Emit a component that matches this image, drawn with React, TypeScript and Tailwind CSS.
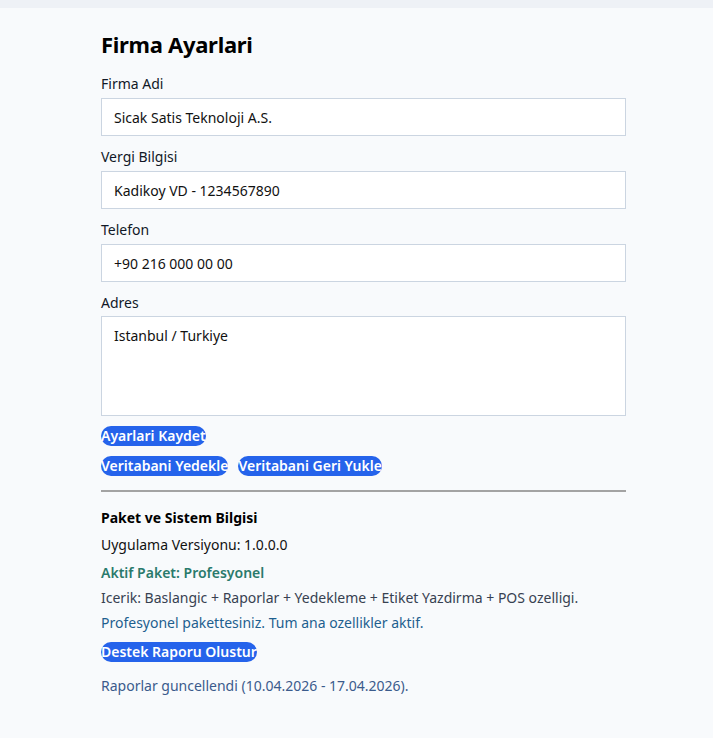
import React from 'react'

const font = { fontFamily: '"Noto Sans", "Open Sans", sans-serif' }

function Field({ label, value }: { label: string; value: string }) {
  return (
    <div className="flex flex-col">
      <label className="text-[14px] leading-[20px] text-[#111827] mb-[4px]">{label}</label>
      <input
        readOnly
        value={value}
        className="h-[38px] w-full border border-[#cbd5e1] bg-white px-[12px] text-[14px] text-[#111] outline-none"
      />
    </div>
  )
}

function PillButton({ children }: { children: React.ReactNode }) {
  return (
    <button className="h-[20px] rounded-full bg-[#2563eb] text-[14px] font-semibold leading-[20px] text-white">
      {children}
    </button>
  )
}

export default function App() {
  return (
    <div className="min-h-[738px] bg-[#f8fafc]" style={font}>
      <div className="h-[8px] bg-[#eef1f6]" />
      <div className="ml-[101px] w-[525px] pt-[21px]">
        <h1 className="text-[22px] font-bold leading-[30px] text-black mb-[15px] tracking-[-0.3px]">Firma Ayarlari</h1>
        <div className="flex flex-col gap-[11px]">
          <Field label="Firma Adi" value="Sicak Satis Teknoloji A.S." />
          <Field label="Vergi Bilgisi" value="Kadikoy VD - 1234567890" />
          <Field label="Telefon" value="+90 216 000 00 00" />
          <div className="flex flex-col">
            <label className="text-[14px] leading-[20px] text-[#111827] mb-[3px]">Adres</label>
            <textarea
              readOnly
              value="Istanbul / Turkiye"
              className="h-[100px] w-full resize-none border border-[#cbd5e1] bg-white px-[12px] py-[8px] text-[14px] text-[#111] outline-none"
            />
          </div>
        </div>
        <div className="mt-[10px] flex">
          <PillButton>Ayarlari Kaydet</PillButton>
        </div>
        <div className="mt-[10px] flex gap-[10px]">
          <PillButton>Veritabani Yedekle</PillButton>
          <PillButton>Veritabani Geri Yukle</PillButton>
        </div>
        <hr className="mt-[14px] border-0 h-[2px] bg-[#a3a3a3]" />
        <h3 className="mt-[16px] text-[14px] font-bold leading-[20px] text-black">Paket ve Sistem Bilgisi</h3>
        <p className="mt-[7px] text-[14px] leading-[20px] text-[#111]">Uygulama Versiyonu: 1.0.0.0</p>
        <p className="mt-[8px] text-[14px] font-semibold leading-[20px] text-[#2a7a6c]">Aktif Paket: Profesyonel</p>
        <p className="mt-[5px] text-[14px] leading-[20px] text-[#374151]">
          Icerik: Baslangic + Raporlar + Yedekleme + Etiket Yazdirma + POS ozelligi.
        </p>
        <p className="mt-[5px] text-[14px] leading-[20px] text-[#1e5f8f]">
          Profesyonel pakettesiniz. Tum ana ozellikler aktif.
        </p>
        <div className="mt-[9px] flex">
          <PillButton>Destek Raporu Olustur</PillButton>
        </div>
        <p className="mt-[14px] text-[14px] leading-[20px] text-[#3b5b8c]">
          Raporlar guncellendi (10.04.2026 - 17.04.2026).
        </p>
      </div>
    </div>
  )
}
